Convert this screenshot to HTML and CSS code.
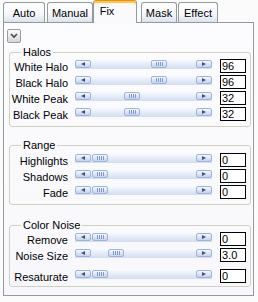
FILE: index.html
```html
<!DOCTYPE html>
<html lang="en">
<head>
    <meta charset="UTF-8">
    <title>Fix</title>
    <link rel="stylesheet" href="styles.css">
</head>
<body>
    <div class="tabs">
        <div class="tab tab-auto">Auto</div>
        <div class="tab tab-manual">Manual</div>
        <div class="tab tab-fix active">Fix</div>
        <div class="tab tab-mask">Mask</div>
        <div class="tab tab-effect">Effect</div>
    </div>

    <div class="panel">
        <button class="drop" aria-label="Presets">
            <svg width="8" height="6" viewBox="0 0 8 6"><path d="M1 1 L4 4 L7 1" fill="none" stroke="#4a4a4a" stroke-width="1.6"/></svg>
        </button>

        <fieldset class="group halos">
            <legend>Halos</legend>
            <div class="row">
                <span class="label">White Halo</span>
                <div class="scroll"><span class="btn left"></span><span class="track"><span class="thumb" style="margin-left: 60px"></span></span><span class="btn right"></span></div>
                <span class="value">96</span>
            </div>
            <div class="row">
                <span class="label">Black Halo</span>
                <div class="scroll"><span class="btn left"></span><span class="track"><span class="thumb" style="margin-left: 60px"></span></span><span class="btn right"></span></div>
                <span class="value">96</span>
            </div>
            <div class="row">
                <span class="label">White Peak</span>
                <div class="scroll"><span class="btn left"></span><span class="track"><span class="thumb" style="margin-left: 33px"></span></span><span class="btn right"></span></div>
                <span class="value">32</span>
            </div>
            <div class="row">
                <span class="label">Black Peak</span>
                <div class="scroll"><span class="btn left"></span><span class="track"><span class="thumb" style="margin-left: 33px"></span></span><span class="btn right"></span></div>
                <span class="value">32</span>
            </div>
        </fieldset>

        <fieldset class="group range">
            <legend>Range</legend>
            <div class="row">
                <span class="label">Highlights</span>
                <div class="scroll"><span class="btn left"></span><span class="track"><span class="thumb" style="margin-left: 1px"></span></span><span class="btn right"></span></div>
                <span class="value">0</span>
            </div>
            <div class="row">
                <span class="label">Shadows</span>
                <div class="scroll"><span class="btn left"></span><span class="track"><span class="thumb" style="margin-left: 1px"></span></span><span class="btn right"></span></div>
                <span class="value">0</span>
            </div>
            <div class="row">
                <span class="label">Fade</span>
                <div class="scroll"><span class="btn left"></span><span class="track"><span class="thumb" style="margin-left: 1px"></span></span><span class="btn right"></span></div>
                <span class="value">0</span>
            </div>
        </fieldset>

        <fieldset class="group noise">
            <legend>Color Noise</legend>
            <div class="row">
                <span class="label">Remove</span>
                <div class="scroll"><span class="btn left"></span><span class="track"><span class="thumb" style="margin-left: 1px"></span></span><span class="btn right"></span></div>
                <span class="value">0</span>
            </div>
            <div class="row">
                <span class="label">Noise Size</span>
                <div class="scroll"><span class="btn left"></span><span class="track"><span class="thumb" style="margin-left: 17px"></span></span><span class="btn right"></span></div>
                <span class="value">3.0</span>
            </div>
            <div class="row spaced">
                <span class="label">Resaturate</span>
                <div class="scroll"><span class="btn left"></span><span class="track"><span class="thumb" style="margin-left: 1px"></span></span><span class="btn right"></span></div>
                <span class="value">0</span>
            </div>
        </fieldset>
    </div>
</body>
</html>
```

FILE: styles.css
```css
* {
    margin: 0;
    padding: 0;
    box-sizing: border-box;
}

body {
    font-family: "Liberation Sans", Arial, sans-serif;
    font-size: 11px;
    color: #000;
    background-color: #fbfbfb;
}

/* Tabs */
.tabs {
    display: flex;
    align-items: flex-end;
    height: 22px;
    padding-left: 3px;
}

.tab {
    height: 20px;
    padding-top: 4px;
    text-align: center;
    line-height: 13px;
    border: 1px solid #919b9c;
    border-bottom: none;
    border-radius: 3px 3px 0 0;
    background: linear-gradient(#ffffff, #f7f8fb 55%, #dce3ee);
}

.tab-auto { width: 42px; }
.tab-manual { width: 46px; margin-left: 2px; }
.tab-fix { width: 44px; }
.tab-mask { width: 36px; margin-left: 4px; }
.tab-effect { width: 40px; margin-left: 1px; }

.tab.active {
    position: relative;
    z-index: 1;
    height: 23px;
    margin-bottom: -1px;
    padding-top: 4px;
    padding-right: 16px;
    border-top: 1px solid #e68b2c;
    box-shadow: inset 0 2px #ffc83c;
    background: #fafafd;
}

/* Panel */
.panel {
    width: 251px;
    height: 274px;
    margin-left: 3px;
    padding: 6px 2px 0 3px;
    border: 1px solid #919b9c;
    background: linear-gradient(#fcfcfe, #f8f8fc);
}

.drop {
    display: flex;
    align-items: center;
    justify-content: center;
    width: 14px;
    height: 14px;
    border: 1px solid #9c9c9c;
    border-radius: 2px;
    background: linear-gradient(#fbfbfb, #d6d6d6);
}

/* Groups */
.group {
    margin-left: 2px;
    width: 242px;
    border: 1px solid #d0d0bf;
    border-radius: 3px;
    padding: 0 4px 3px 0;
}

.group legend {
    margin-left: 11px;
    padding: 0 2px;
    line-height: 13px;
    height: 13px;
}

.halos { margin-top: 3px; }
.range { margin-top: 12px; padding-top: 1px; }
.noise { margin-top: 14px; padding-bottom: 1px; }

.row {
    display: flex;
    align-items: flex-start;
    height: 16px;
}

.row.spaced { margin-top: 5px; }

.label {
    width: 58px;
    padding-top: 2px;
    line-height: 12px;
    white-space: nowrap;
    display: flex;
    justify-content: flex-end;
}

.value {
    width: 26px;
    height: 14px;
    margin-left: 8px;
    padding-left: 1px;
    line-height: 12px;
    border: 1px solid #000;
    background: #fff;
}

/* Scrollbar */
.scroll {
    display: flex;
    align-items: center;
    width: 137px;
    height: 10px;
    margin-left: 7px;
    background: linear-gradient(#fbfcff, #eaf0fa 40%, #d3ddef);
}

.track {
    flex: 1;
    display: flex;
    align-items: center;
}

.btn,
.thumb {
    width: 16px;
    height: 8px;
    border: 1px solid #9db2dc;
    border-radius: 2px;
    background: linear-gradient(#f6f9fe, #c4d3f0);
}

.btn {
    display: flex;
    align-items: center;
    justify-content: center;
}

.btn::before {
    content: "";
    border-top: 2px solid transparent;
    border-bottom: 2px solid transparent;
}

.btn.left::before { border-right: 4px solid #3f5378; }
.btn.right::before { border-left: 4px solid #3f5378; }

.thumb {
    background:
        linear-gradient(90deg, transparent 4px, #8499c6 4px, #8499c6 5px, transparent 5px,
            transparent 6px, #8499c6 6px, #8499c6 7px, transparent 7px,
            transparent 8px, #8499c6 8px, #8499c6 9px, transparent 9px,
            transparent 10px, #8499c6 10px, #8499c6 11px, transparent 11px) center / 100% 4px no-repeat,
        linear-gradient(#f6f9fe, #c4d3f0);
}
```
